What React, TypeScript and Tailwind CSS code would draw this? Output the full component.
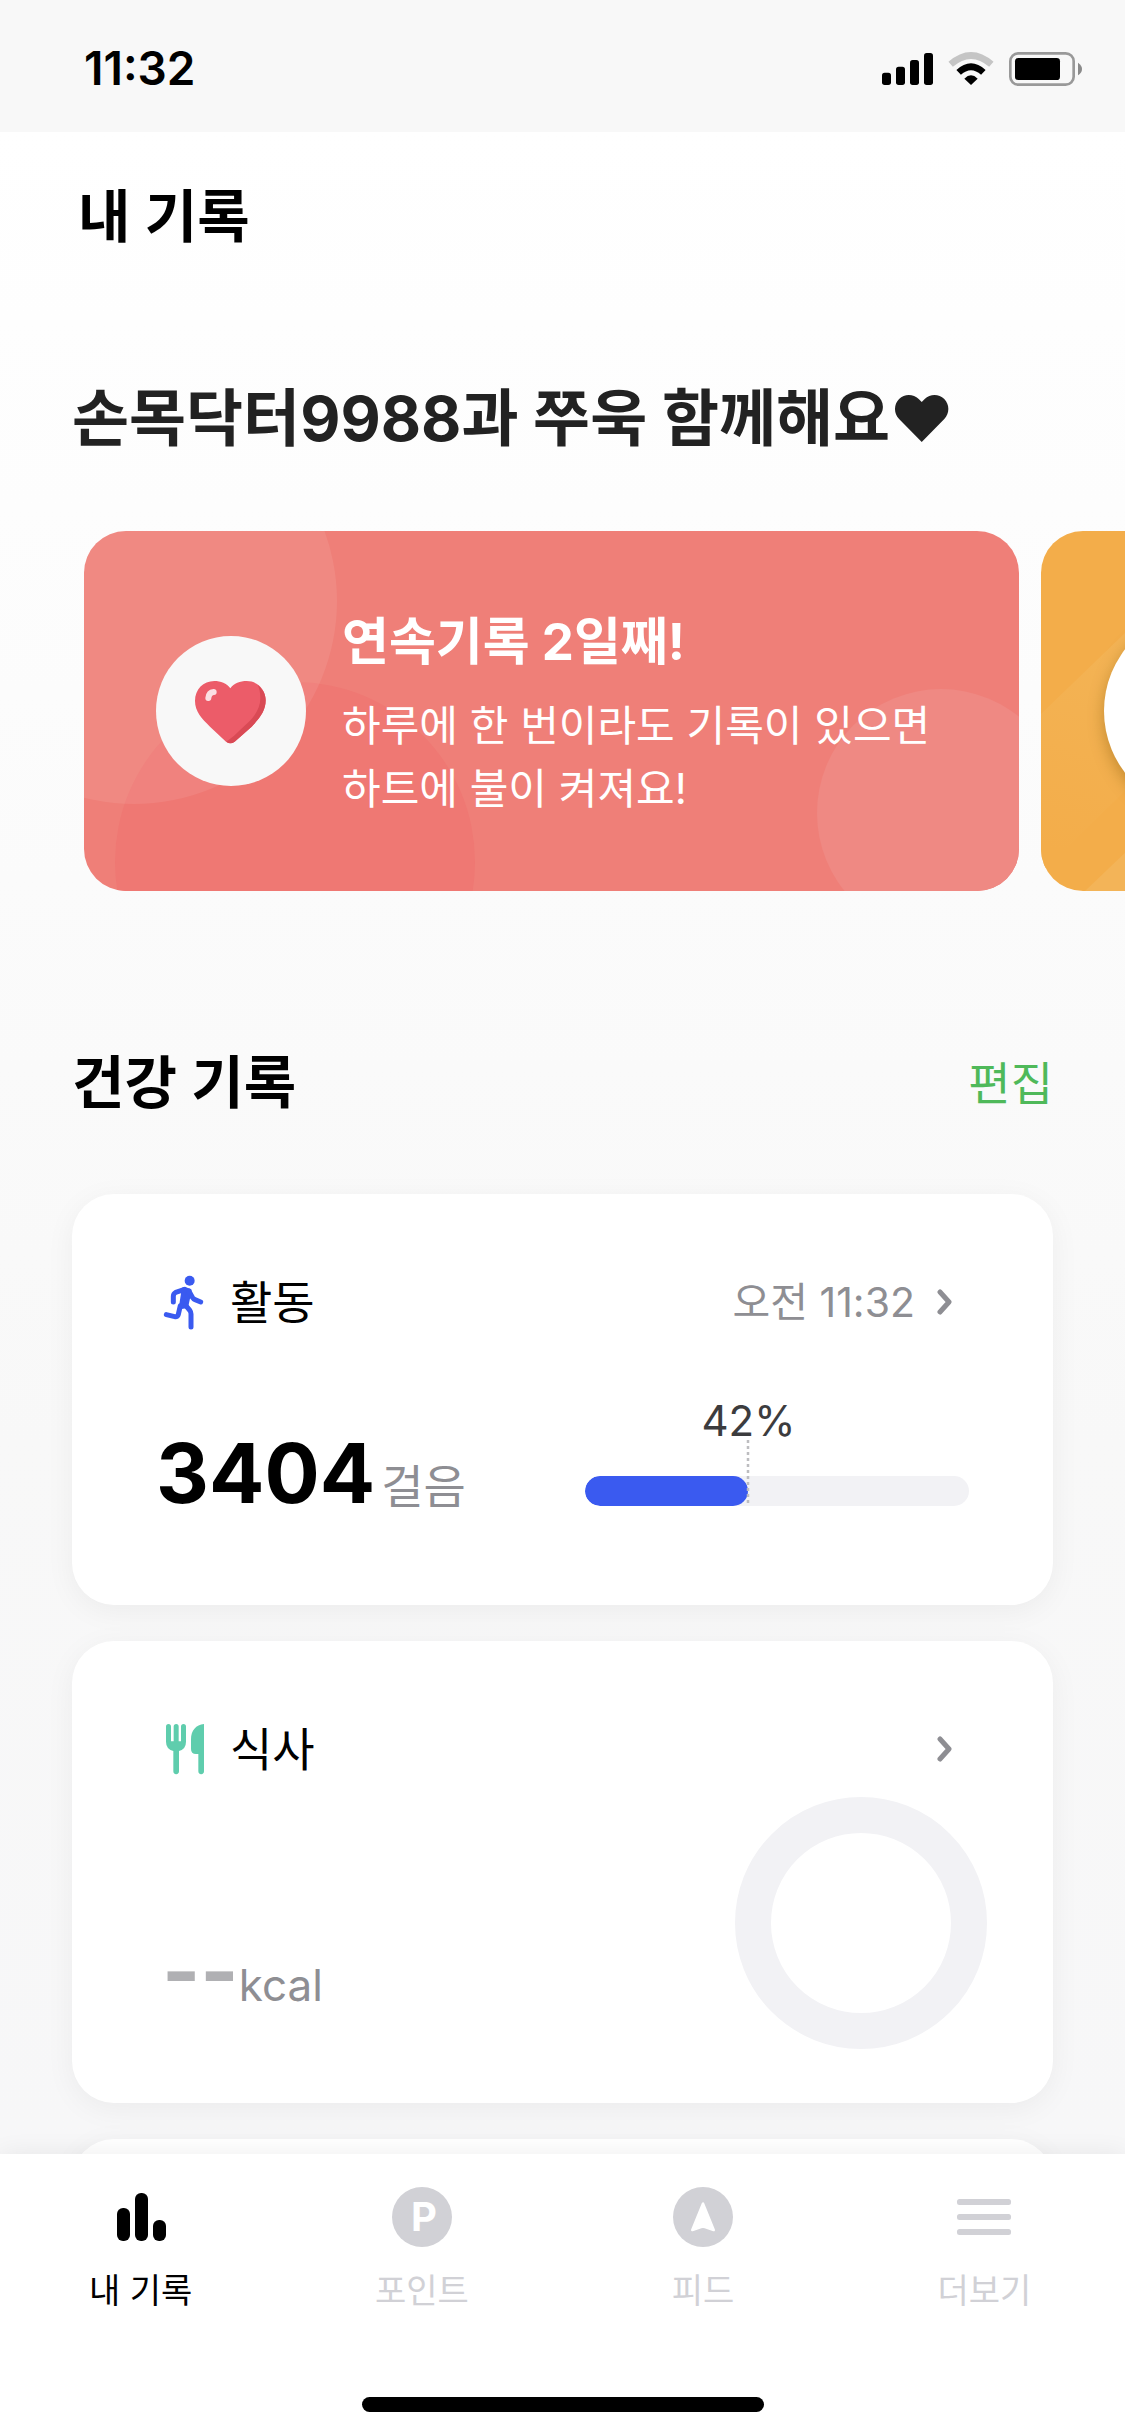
import type { ReactNode } from "react";

const STEPS = 3404;
const STEP_GOAL = 8000;

function StatusIcons() {
  return (
    <svg viewBox="60 60 612 111" className="h-[37px] w-[204px]" aria-hidden="true">
      <rect x="66" y="128" width="27" height="37" rx="8" />
      <rect x="108" y="110" width="27" height="55" rx="8" />
      <rect x="150" y="90" width="27" height="75" rx="8" />
      <rect x="192" y="69" width="27" height="96" rx="8" />
      <path d="M272 103Q333 50 394 103" fill="none" stroke="#c5c5c5" strokeWidth="20" />
      <path d="M296 127Q333 93 370 127" fill="none" stroke="#000" strokeWidth="20" />
      <path d="M313 146Q333 126 353 146L333 165Z" />
      <rect x="451" y="70" width="190" height="94" rx="24" fill="none" stroke="#999" strokeWidth="8" />
      <rect x="465" y="84" width="135" height="66" rx="10" />
      <path d="M654 98Q666 106 666 117Q666 129 654 136Z" fill="#8a8a8a" />
    </svg>
  );
}

function HeartBadge() {
  return (
    <svg viewBox="18 18 450 450" className="size-[150px] shrink-0" aria-hidden="true">
      <circle cx="243" cy="243" r="225" fill="#f8f8f8" />
      <path
        d="M241 175C230 160 212 153 193 153C160 153 135 178 135 213C135 245 155 265 180 290L228 335Q240 344 254 335L305 290C332 262 347 240 347 211C347 178 322 153 290 153C270 153 252 160 241 175Z"
        fill="#ec5c69"
      />
      <path
        d="M323 165C338 177 347 192 347 211C347 240 332 262 305 290L254 335Q242 344 229 335C250 322 270 300 292 280C318 255 331 232 331 205C331 190 329 176 323 165Z"
        fill="#d94a55"
      />
      <path d="M175 204C176 194 182 187 191 186" fill="none" stroke="#fbdfe3" strokeWidth="18" strokeLinecap="round" />
    </svg>
  );
}

function RunIcon() {
  return (
    <svg viewBox="48 96 168 180" className="h-[60px] w-[56px]" aria-hidden="true" fill="none" stroke="#3a5af0" strokeWidth="15" strokeLinecap="round" strokeLinejoin="round">
      <circle cx="149" cy="122" r="15" fill="#3a5af0" stroke="none" />
      <path d="M100 186V169Q100 161 107 157L134 148" />
      <path d="M132 148L148 152L138 198L124 200Z" fill="#3a5af0" strokeWidth="14" />
      <path d="M147 154L157 172Q160 177 165 179L182 186" />
      <path d="M79 224L104 230Q113 232 115 223L121 197" />
      <path d="M137 196L150 212Q153 216 153 222V261" />
    </svg>
  );
}

function MealIcon() {
  return (
    <svg viewBox="48 57 168 180" className="h-[60px] w-[56px]" aria-hidden="true" fill="#5fcdad">
      <path d="M78 79.500a7.500 7.500 0 0 1 15 0V124H101V79.500a7.500 7.500 0 0 1 15 0V124H123V79.500a7.500 7.500 0 0 1 15 0V125Q138 147 117 153V214a8.500 8.500 0 0 1-17 0V153Q78 147 78 125Z" />
      <path d="M192 72C168 74 153 92 153 118V147Q153 162 168 162H175V214a8.500 8.500 0 0 0 17 0Z" />
    </svg>
  );
}

function Chevron() {
  return (
    <svg viewBox="0 0 15 26" className="h-[26px] w-[15px]" aria-hidden="true">
      <path d="M3 3L12 13L3 23" fill="none" stroke="#8e8e93" strokeWidth="5" strokeLinecap="round" strokeLinejoin="round" />
    </svg>
  );
}

function CardHeader({ icon, title, time }: { icon: ReactNode; title: string; time?: string }) {
  return (
    <header className="flex h-[60px] items-center justify-between">
      <h3 className="flex items-center gap-[18px] text-[46px] leading-[62px] font-normal">
        {icon}
        {title}
      </h3>
      <button type="button" aria-label={`${title} 자세히`} className="flex items-center gap-[22px] pr-[17px] text-[41px] leading-[60px] text-[#8e8e93]">
        {time}
        <Chevron />
      </button>
    </header>
  );
}

function ActivityCard() {
  const percent = (STEPS / STEP_GOAL) * 100;
  return (
    <section className="rounded-[42px] bg-white px-[84px] pt-[78px] pb-[99px] shadow-[0_6px_30px_rgba(0,0,0,0.05)]">
      <CardHeader icon={<RunIcon />} title="활동" time="오전 11:32" />
      <div className="mt-[62px] flex items-end justify-between">
        <p className="flex items-baseline gap-1.5 text-[46px] leading-[40px] text-[#8e8e93]">
          <strong className="text-[82px] leading-[60px] font-bold text-black">{STEPS}</strong>
          걸음
        </p>
        <div className="relative w-[384px] pt-[82px]">
          <span className="absolute top-0 -translate-x-1/2 text-[42px] leading-[54px] text-[#3c3c3e]" style={{ left: `${percent}%` }}>
            {Math.floor(percent)}%
          </span>
          <div className="h-[30px] overflow-hidden rounded-full bg-[#f2f2f5]">
            <div className="h-full rounded-full bg-[#3a5af0]" style={{ width: `${percent}%` }} />
          </div>
          <svg viewBox="0 0 3 63" className="absolute top-[46px] h-[63px] w-[3px] -translate-x-1/2" style={{ left: `${percent}%` }} aria-hidden="true">
            <path d="M1.500 0V63" stroke="#bdbdc0" strokeWidth="3" strokeDasharray="3 3" />
          </svg>
        </div>
      </div>
    </section>
  );
}

function MealCard() {
  return (
    <section className="rounded-[42px] bg-white pt-[78px] pb-[54px] shadow-[0_6px_30px_rgba(0,0,0,0.05)]">
      <div className="px-[84px]">
        <CardHeader icon={<MealIcon />} title="식사" />
      </div>
      <div className="mt-[18px] flex items-end justify-between pr-[66px] pl-[90px]">
        <p className="flex items-baseline pb-[32px] text-[44px] leading-[64px] text-[#8e8e93]">
          <strong className="text-[82px] leading-[64px] font-bold text-[#b0b0b3]">--</strong>
          kcal
        </p>
        <div className="size-[252px] rounded-full border-[36px] border-[#f2f2f5]" />
      </div>
    </section>
  );
}

function StreakCard() {
  return (
    <article className="relative flex h-[360px] w-[935px] shrink-0 items-center gap-9 overflow-hidden rounded-[42px] bg-[#ef7f78] pl-[72px] text-white">
      <svg viewBox="0 0 935 360" className="absolute inset-0 size-full" aria-hidden="true">
        <circle cx="211" cy="331" r="180" fill="#ef7873" />
        <circle cx="50" cy="70" r="203" fill="#fff" opacity="0.08" />
        <circle cx="857" cy="282" r="124" fill="#ef8983" />
      </svg>
      <div className="relative">
        <HeartBadge />
      </div>
      <div className="relative pt-2">
        <h3 className="text-[51px] leading-[64px] font-bold">연속기록 2일째!</h3>
        <p className="mt-[20px] text-[42px] leading-[63px]">
          하루에 한 번이라도 기록이 있으면
          <br />
          하트에 불이 켜져요!
        </p>
      </div>
    </article>
  );
}

function NextCard() {
  return (
    <article className="relative flex h-[360px] w-[935px] shrink-0 items-center overflow-hidden rounded-[42px] bg-[#f3ad4a] pl-[63px]">
      <svg viewBox="0 0 935 360" className="absolute inset-0 size-full" aria-hidden="true">
        <defs>
          <linearGradient id="band" gradientUnits="userSpaceOnUse" x1="90" y1="90" x2="20" y2="320">
            <stop offset="0" stopColor="#f3b456" />
            <stop offset="1" stopColor="#f3ad4a" />
          </linearGradient>
        </defs>
        <path d="M0 183L190 0H350L0 342Z" fill="url(#band)" />
        <path d="M44 360L420 0H640L264 360Z" fill="#f3b458" />
      </svg>
      <div className="relative size-[202px] rounded-full bg-white shadow-[0_6px_16px_rgba(120,80,0,0.4)]" />
    </article>
  );
}

function TabIcon({ name }: { name: string }) {
  if (name === "records")
    return (
      <svg viewBox="0 0 72 72" className="size-[72px]" aria-hidden="true" fill="currentColor">
        <rect x="12" y="27" width="13" height="33" rx="6" />
        <rect x="30" y="12" width="13" height="48" rx="6" />
        <rect x="48" y="39" width="13" height="21" rx="6" />
      </svg>
    );
  if (name === "points")
    return (
      <span className="flex size-[72px] items-center justify-center">
        <span className="flex size-[60px] items-center justify-center rounded-full bg-[#d1d1d6] pl-1 text-[40px] leading-[60px] font-bold text-white">P</span>
      </span>
    );
  if (name === "feed")
    return (
      <svg viewBox="891 2 216 216" className="size-[72px]" aria-hidden="true">
        <circle cx="999" cy="110" r="90" fill="#d1d1d6" />
        <path d="M999 70L967 149L993 140Q999 138 1005 140L1031 149Z" fill="#fff" stroke="#fff" strokeWidth="8" strokeLinejoin="round" />
      </svg>
    );
  return (
    <svg viewBox="0 0 72 72" className="size-[72px]" aria-hidden="true" fill="currentColor">
      <rect x="9" y="18" width="54" height="6" rx="2.500" />
      <rect x="9" y="33" width="54" height="6" rx="2.500" />
      <rect x="9" y="48" width="54" height="6" rx="2.500" />
    </svg>
  );
}

const TABS = [
  { name: "records", label: "내 기록", active: true },
  { name: "points", label: "포인트", active: false },
  { name: "feed", label: "피드", active: false },
  { name: "more", label: "더보기", active: false },
];

export default function App() {
  return (
    <div className="flex h-screen flex-col bg-white font-['Inter','Noto_Sans_CJK_KR',sans-serif] text-black" lang="ko">
      <div className="flex h-[132px] shrink-0 items-center justify-between bg-[#f8f8f8] pt-1 pr-[41px] pl-[84px]">
        <time className="text-[46px] leading-[54px] font-semibold">11:32</time>
        <StatusIcons />
      </div>

      <main className="min-h-0 flex-1 overflow-y-auto bg-linear-to-b from-white via-[#f8f8f8] via-65% to-[#f7f7f8] [scrollbar-width:none]">
        <h1 className="px-[78px] pt-[53px] text-[57px] leading-[64px] font-semibold">내 기록</h1>

        <h2 className="mt-[134px] px-[72px] text-[62px] leading-[72px] font-bold whitespace-nowrap text-[#222]">
          손목닥터9988과 쭈욱 함께해요♥
        </h2>

        <div className="mt-[76px] flex gap-[22px] overflow-x-auto pl-[84px] [scrollbar-width:none]">
          <StreakCard />
          <NextCard />
        </div>

        <div className="mt-[160px] flex items-center justify-between px-[72px]">
          <h2 className="text-[57px] leading-[64px] font-semibold">건강 기록</h2>
          <button type="button" className="text-[46px] leading-[62px] text-[#4fb95a]">
            편집
          </button>
        </div>

        <div className="mt-[79px] flex flex-col gap-9 px-[72px] pb-9">
          <ActivityCard />
          <MealCard />
          <section className="h-[411px] rounded-[42px] bg-white shadow-[0_6px_30px_rgba(0,0,0,0.05)]" />
        </div>
      </main>

      <nav className="relative flex shrink-0 flex-col items-center bg-white pt-[27px] pb-6 shadow-[0_0_24px_rgba(0,0,0,0.07)]">
        <div className="grid w-full grid-cols-4">
          {TABS.map((tab) => (
            <a
              key={tab.name}
              href={`#${tab.name}`}
              aria-current={tab.active ? "page" : undefined}
              className={`flex flex-col items-center gap-4 text-[34px] leading-[44px] ${tab.active ? "text-black" : "text-[#d1d1d6]"}`}
            >
              <TabIcon name={tab.name} />
              {tab.label}
            </a>
          ))}
        </div>
        <div className="mt-[84px] h-[15px] w-[402px] rounded-full bg-black" />
      </nav>
    </div>
  );
}
